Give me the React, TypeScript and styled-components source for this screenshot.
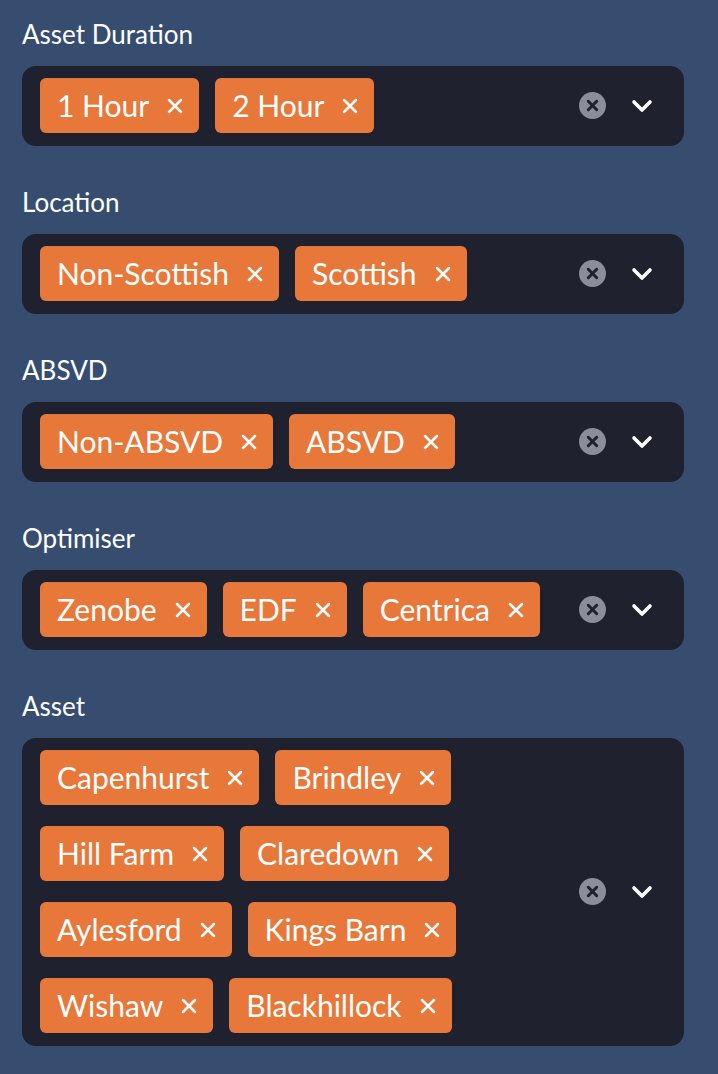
import React from 'react';
import styled, { createGlobalStyle } from 'styled-components';

const GlobalStyle = createGlobalStyle`
    html, body {
        margin: 0;
        padding: 0;
        background: #364d70;
    }
    body {
        font-family: Lato, "Noto Sans", sans-serif;
        color: #ffffff;
    }
`;

const filters = [
    { label: 'Asset Duration', values: ['1 Hour', '2 Hour'] },
    { label: 'Location', values: ['Non-Scottish', 'Scottish'] },
    { label: 'ABSVD', values: ['Non-ABSVD', 'ABSVD'] },
    { label: 'Optimiser', values: ['Zenobe', 'EDF', 'Centrica'] },
    {
        label: 'Asset',
        values: ['Capenhurst', 'Brindley', 'Hill Farm', 'Claredown', 'Aylesford', 'Kings Barn', 'Wishaw', 'Blackhillock'],
    },
];

function CloseMark() {
    return (
        <svg width="16" height="16" viewBox="0 0 16 16">
            <path d="M2 2 L14 14 M14 2 L2 14" stroke="#ffffff" strokeWidth="2.5" strokeLinecap="round" />
        </svg>
    );
}

function ClearIcon() {
    return (
        <svg width="27" height="27" viewBox="0 0 27 27">
            <circle cx="13.5" cy="13.5" r="13.5" fill="#8b8d9b" />
            <path d="M9.3 9.3 L17.7 17.7 M17.7 9.3 L9.3 17.7" stroke="#1f212e" strokeWidth="3" strokeLinecap="round" />
        </svg>
    );
}

function Chevron() {
    return (
        <svg width="22" height="14" viewBox="0 0 22 14">
            <path d="M3 3 L11 11 L19 3" stroke="#ffffff" strokeWidth="3.6" fill="none" strokeLinecap="round" strokeLinejoin="round" />
        </svg>
    );
}

function MultiSelect({ label, values }: { label: string; values: string[] }) {
    return (
        <Section>
            <Label>{label}</Label>
            <SelectBox>
                <Tags>
                    {values.map((v) => (
                        <Tag key={v}>
                            <TagText>{v}</TagText>
                            <CloseMark />
                        </Tag>
                    ))}
                </Tags>
                <Controls>
                    <ClearIcon />
                    <Chevron />
                </Controls>
            </SelectBox>
        </Section>
    );
}

export default function App() {
    return (
        <Page>
            <GlobalStyle />
            {filters.map((f) => (
                <MultiSelect key={f.label} label={f.label} values={f.values} />
            ))}
        </Page>
    );
}

const Page = styled.div`
    width: 718px;
    padding: 16px 34px 28px 22px;
    box-sizing: border-box;
    display: flex;
    flex-direction: column;
    gap: 38px;
`;

const Section = styled.div`
    display: flex;
    flex-direction: column;
    gap: 14px;
`;

const Label = styled.div`
    font-size: 26px;
    line-height: 36px;
    height: 36px;
`;

const SelectBox = styled.div`
    background: #1f212e;
    border-radius: 14px;
    min-height: 80px;
    box-sizing: border-box;
    padding: 12px 31px 13px 18px;
    display: flex;
    align-items: center;
`;

const Tags = styled.div`
    flex: 1;
    display: flex;
    flex-wrap: wrap;
    column-gap: 16px;
    row-gap: 21px;
    padding-right: 20px;
`;

const Tag = styled.div`
    background: #e8773a;
    border-radius: 6px;
    height: 55px;
    padding: 0 16px 0 17px;
    display: flex;
    align-items: center;
    gap: 18px;
    font-size: 30px;
    white-space: nowrap;
`;

const TagText = styled.span`
    line-height: 1;
    margin-top: -2px;
`;

const Controls = styled.div`
    display: flex;
    align-items: center;
    gap: 25px;
`;
